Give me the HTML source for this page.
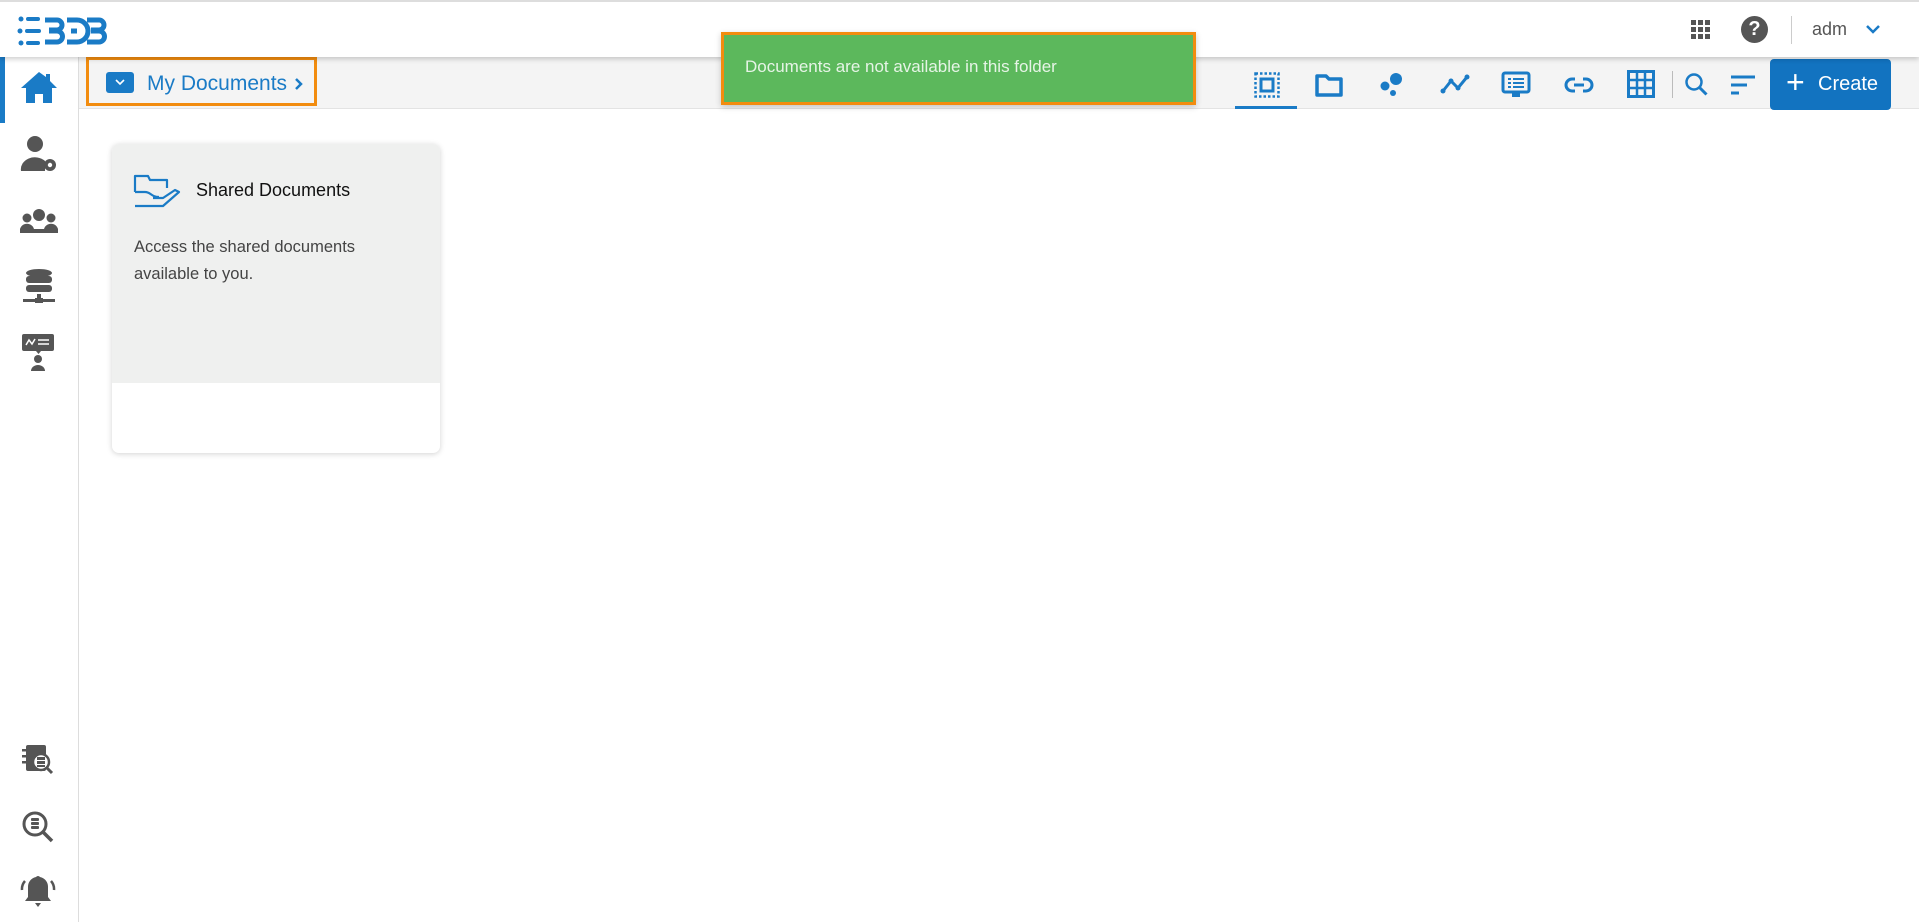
<!DOCTYPE html>
<html><head><meta charset="utf-8"><style>
*{margin:0;padding:0;box-sizing:border-box}
body{width:1919px;height:922px;overflow:hidden;background:#fff;font-family:"Liberation Sans",sans-serif;position:relative}
.abs{position:absolute}
#top{left:0;top:0;width:1919px;height:57px;background:#fff;border-top:2px solid #ddd;box-shadow:0 2px 5px rgba(0,0,0,.2);z-index:3}
#side{left:0;top:57px;width:79px;height:865px;border-right:1px solid #ddd;background:#fff}
#bar{left:79px;top:57px;width:1840px;height:52px;background:#f4f4f4;border-bottom:1px solid #e3e3e3}
svg{position:absolute}
</style></head><body>
<div id="top" class="abs">
 <svg style="left:17px;top:12px" width="90" height="34" viewBox="0 0 90 34">
  <g fill="#1a7bc6"><circle cx="4" cy="5" r="2.5"/><circle cx="3" cy="17" r="2.5"/><circle cx="4" cy="29" r="2.5"/>
  <rect x="9" y="3" width="14" height="4" rx="2"/><rect x="8" y="15" width="16" height="4" rx="2"/><rect x="9" y="27" width="14" height="4" rx="2"/></g>
  <g fill="none" stroke="#1a7bc6" stroke-width="5"><path d="M28 6h12a5 5 0 0 1 0 10h-8M32 17h8a5 5 0 0 1 0 11h-12"/><path d="M50 6h10a11 11 0 0 1 0 22h-10M54 17h6"/><path d="M70 6h12a5 5 0 0 1 0 10h-8M74 17h8a5 5 0 0 1 0 11h-12"/></g>
 </svg>
 <svg style="left:1691px;top:18px" width="20" height="20"><g fill="#555"><rect x="0" y="0" width="5" height="5"/><rect x="7" y="0" width="5" height="5"/><rect x="14" y="0" width="5" height="5"/><rect x="0" y="7" width="5" height="5"/><rect x="7" y="7" width="5" height="5"/><rect x="14" y="7" width="5" height="5"/><rect x="0" y="14" width="5" height="5"/><rect x="7" y="14" width="5" height="5"/><rect x="14" y="14" width="5" height="5"/></g></svg>
 <div class="abs" style="left:1741px;top:14px;width:27px;height:27px;border-radius:50%;background:#555;color:#fff;font-weight:bold;font-size:20px;text-align:center;line-height:27px">?</div>
 <div class="abs" style="left:1791px;top:14px;width:1px;height:28px;background:#ccc"></div>
 <div class="abs" style="left:1812px;top:17px;font-size:18px;color:#555">adm</div>
 <svg style="left:1865px;top:22px" width="16" height="12"><path d="M2 2l6 6 6-6" fill="none" stroke="#1a7bc6" stroke-width="2.5"/></svg>
</div>
<div id="side" class="abs">
 <div class="abs" style="left:0;top:0;width:5px;height:66px;background:#1a7bc6"></div>
</div>
<svg style="left:20px;top:70px" width="38" height="34"><path d="M19 2L1 18h5v15h9v-9h8v9h9V18h5L30 11V4h-4v3z" fill="#1a7bc6"/></svg>
<svg style="left:20px;top:135px" width="38" height="38"><g fill="#555"><circle cx="15" cy="9" r="8"/><path d="M1 36a14 12 0 0 1 24-10v10z"/><circle cx="30" cy="30" r="6"/></g><circle cx="30" cy="30" r="2.2" fill="#fff"/></svg>
<svg style="left:20px;top:208px" width="38" height="26"><g fill="#555"><circle cx="19" cy="7" r="6"/><circle cx="7" cy="10" r="4.5"/><circle cx="31" cy="10" r="4.5"/><path d="M0 25a7 7 0 0 1 14-4h10a7 7 0 0 1 14 4z"/></g></svg>
<svg style="left:22px;top:268px" width="34" height="38"><g fill="#555"><ellipse cx="17" cy="5" rx="13" ry="4"/><rect x="4" y="8" width="26" height="7" rx="3"/><rect x="4" y="17" width="26" height="7" rx="3"/><rect x="15" y="26" width="4" height="6"/><rect x="1" y="31" width="32" height="3"/><rect x="13" y="30" width="8" height="5"/></g></svg>
<svg style="left:22px;top:334px" width="34" height="40"><g fill="#555"><rect x="0" y="0" width="32" height="17" rx="2"/><path d="M14 17h5l-2.5 3z"/><circle cx="16" cy="25" r="4"/><path d="M9 37a7 6 0 0 1 14 0z"/></g><path d="M4 11l3-5 3 4 3-5" stroke="#fff" stroke-width="1.5" fill="none"/><path d="M16 6h11M16 10h11" stroke="#fff" stroke-width="1.5"/></svg>
<svg style="left:22px;top:744px" width="34" height="34"><g fill="#555"><rect x="4" y="1" width="20" height="26" rx="2"/><rect x="0" y="5" width="6" height="2.5"/><rect x="0" y="11" width="6" height="2.5"/><rect x="0" y="17" width="6" height="2.5"/></g><circle cx="19" cy="18" r="8" fill="#fff" stroke="#555" stroke-width="2.5"/><path d="M25 24l5 5" stroke="#555" stroke-width="3"/><g fill="#555"><rect x="15" y="13" width="8" height="3"/><rect x="15" y="17" width="8" height="3"/><rect x="15" y="21" width="8" height="2"/></g></svg>
<svg style="left:21px;top:810px" width="34" height="34"><circle cx="14" cy="14" r="11" fill="none" stroke="#555" stroke-width="3"/><path d="M22 22l9 9" stroke="#555" stroke-width="3.5"/><g fill="#555"><rect x="10" y="8" width="8" height="3" rx="1"/><rect x="10" y="12" width="8" height="3" rx="1"/><rect x="10" y="16" width="8" height="3" rx="1"/></g></svg>
<svg style="left:20px;top:874px" width="36" height="36"><g fill="#555"><path d="M18 2a3 3 0 0 1 2 1a10 10 0 0 1 8 10v10l3 4H5l3-4V13a10 10 0 0 1 8-10a3 3 0 0 1 2-1z"/><path d="M15 29h6l-3 4z"/></g><path d="M5 7a12 12 0 0 0-3 9M31 7a12 12 0 0 1 3 9" stroke="#555" stroke-width="2.5" fill="none"/></svg>

<div id="bar" class="abs"></div>
<div class="abs" style="left:86px;top:57px;width:231px;height:49px;border:3px solid #f28c0f"></div>
<div class="abs" style="left:106px;top:72px;width:28px;height:21px;background:#1a7bc6;border-radius:3px"></div>
<svg style="left:114px;top:78px" width="12" height="8"><path d="M2 2l4 4 4-4" stroke="#fff" stroke-width="1.6" fill="none"/></svg>
<div class="abs" style="left:147px;top:72px;font-size:21px;color:#1a7bc6">My Documents</div>
<svg style="left:294px;top:77px" width="10" height="14"><path d="M2 2l5 5-5 5" stroke="#1a7bc6" stroke-width="2.5" fill="none"/></svg>

<svg style="left:1254px;top:72px" width="26" height="26"><rect x="1.5" y="1.5" width="23" height="23" fill="none" stroke="#1a7bc6" stroke-width="2.5" stroke-dasharray="2.5 2"/><rect x="7" y="7" width="12" height="12" fill="none" stroke="#1a7bc6" stroke-width="3"/></svg>
<div class="abs" style="left:1235px;top:106px;width:62px;height:3px;background:#1a7bc6"></div>
<svg style="left:1315px;top:73px" width="28" height="24"><path d="M2 3h9l3 3h12v16H2z" fill="none" stroke="#1a7bc6" stroke-width="3.5" stroke-linejoin="round"/></svg>
<svg style="left:1379px;top:71px" width="26" height="26"><g fill="#1a7bc6"><circle cx="17" cy="8" r="6"/><circle cx="6" cy="15" r="4.5"/><circle cx="14" cy="22" r="3"/></g></svg>
<svg style="left:1440px;top:73px" width="30" height="22"><path d="M3 18l8-10 7 7 9-11" fill="none" stroke="#1a7bc6" stroke-width="3"/><g fill="#1a7bc6"><circle cx="3" cy="18" r="2.5"/><circle cx="11" cy="8" r="2.5"/><circle cx="18" cy="15" r="2.5"/><circle cx="27" cy="4" r="2.5"/></g></svg>
<svg style="left:1501px;top:71px" width="30" height="28"><rect x="2" y="2" width="26" height="19" rx="2" fill="none" stroke="#1a7bc6" stroke-width="3"/><rect x="11" y="21" width="8" height="5" fill="#1a7bc6"/><path d="M7 8h3M12 8h11M7 12h3M12 12h11M7 16h3M12 16h11" stroke="#1a7bc6" stroke-width="2"/></svg>
<svg style="left:1564px;top:76px" width="30" height="18"><path d="M11 3H8a6 6 0 0 0 0 12h3M19 3h3a6 6 0 0 1 0 12h-3M10 9h10" fill="none" stroke="#1a7bc6" stroke-width="3"/></svg>
<svg style="left:1627px;top:70px" width="28" height="28"><rect x="1.5" y="1.5" width="25" height="25" fill="none" stroke="#1a7bc6" stroke-width="3"/><path d="M10 2v24M18 2v24M2 10h24M2 18h24" stroke="#1a7bc6" stroke-width="2.5"/></svg>
<div class="abs" style="left:1672px;top:71px;width:1px;height:27px;background:#bbb"></div>
<svg style="left:1684px;top:72px" width="26" height="26"><circle cx="10" cy="10" r="7.5" fill="none" stroke="#1a7bc6" stroke-width="2.5"/><path d="M15.5 15.5l7 7" stroke="#1a7bc6" stroke-width="3"/></svg>
<svg style="left:1731px;top:74px" width="26" height="22"><path d="M0 3h24M0 11h16M0 19h8" stroke="#1a7bc6" stroke-width="3"/></svg>
<div class="abs" style="left:1770px;top:59px;width:121px;height:51px;background:#1273c0;border-radius:4px;color:#fff;font-size:20px;line-height:51px"><span style="position:absolute;left:16px;top:-2px;font-size:32px;font-weight:300">+</span><span style="position:absolute;left:48px">Create</span></div>

<div class="abs" style="left:112px;top:144px;width:328px;height:309px;background:#fff;border-radius:7px;box-shadow:0 1px 6px rgba(0,0,0,.18);overflow:hidden">
 <div style="height:239px;background:#eff0ef"></div>
</div>
<svg style="left:133px;top:174px" width="50" height="34"><path d="M2 18V2h13l2 4h17v8M2 32h28l16-14-4-2-12 8h-10M2 18h10c6 0 6 5 14 5" fill="none" stroke="#1a7bc6" stroke-width="2.2" stroke-linejoin="round"/></svg>
<div class="abs" style="left:196px;top:180px;font-size:18px;color:#111">Shared Documents</div>
<div class="abs" style="left:134px;top:234px;font-size:16.5px;color:#444;line-height:27px">Access the shared documents<br>available to you.</div>

<div class="abs" style="left:721px;top:32px;width:475px;height:73px;background:#5cb85c;border:3px solid #f28c0f;box-shadow:0 2px 6px rgba(0,0,0,.2);z-index:5;color:#e6f4e6;font-size:17px;padding-left:21px;line-height:63px">Documents are not available in this folder</div>
</body></html>
